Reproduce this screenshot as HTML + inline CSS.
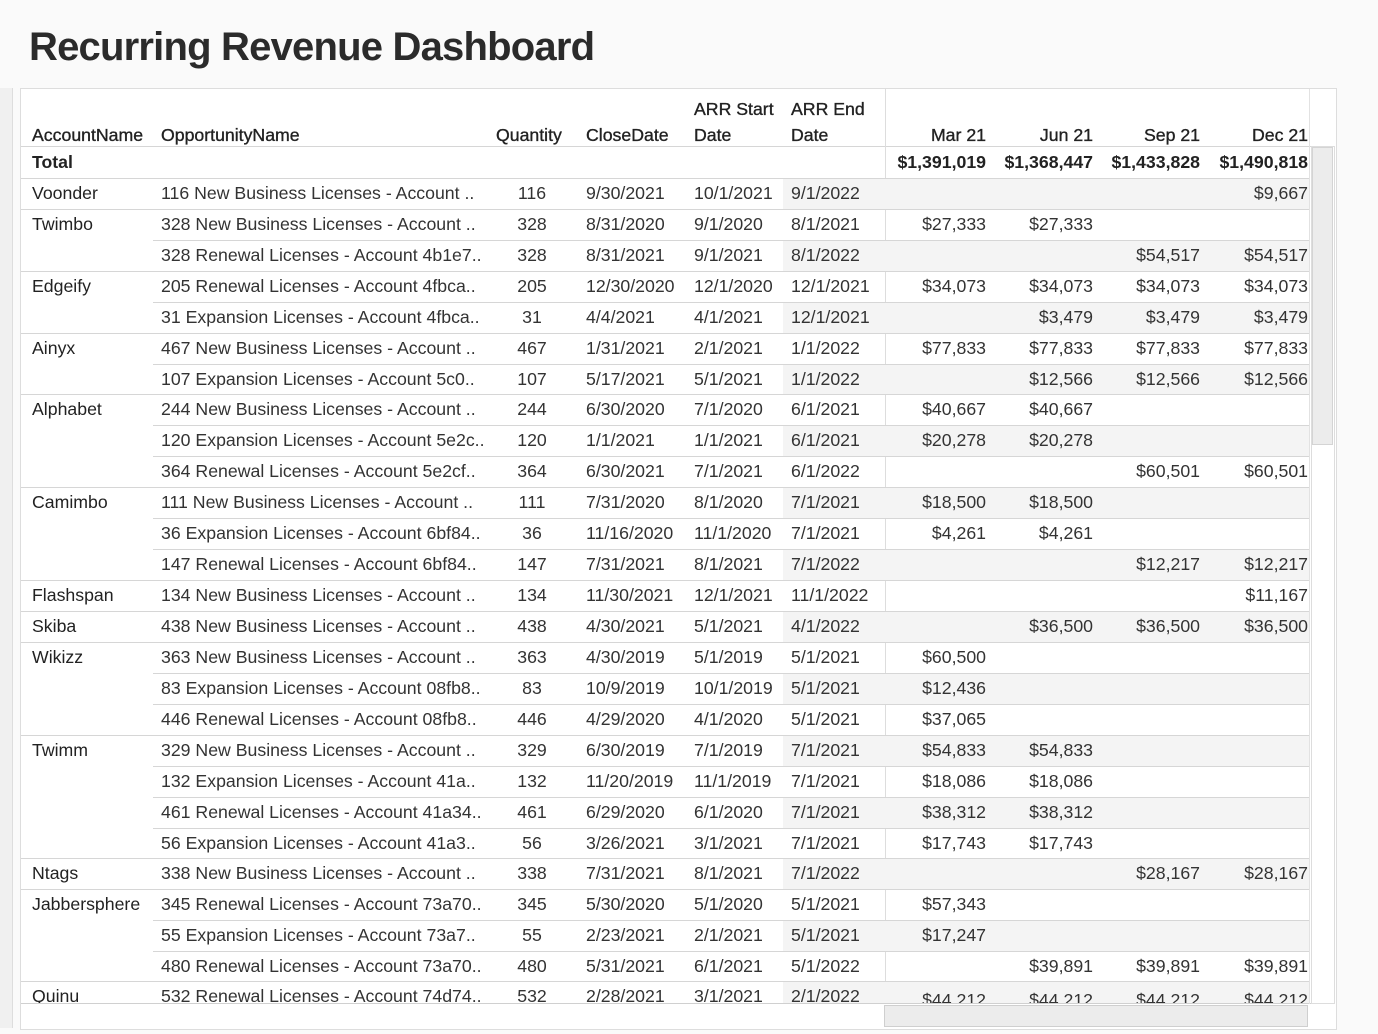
<!DOCTYPE html>
<html><head><meta charset="utf-8"><style>
body{margin:0;width:1378px;height:1034px;background:#fafafa;overflow:hidden;position:relative;font-family:"Liberation Sans",sans-serif;color:#333}
.t{position:absolute;left:29px;top:25px;font-size:40px;font-weight:bold;color:#2b2b2b;letter-spacing:-0.8px}
.lp{position:absolute;left:0;top:88px;width:12px;height:940px;background:#f0f0f0;border-right:1px solid #ddd}
.box{position:absolute;left:20px;top:88px;width:1315px;height:940px;background:#fff;border:1px solid #ddd;overflow:hidden}
.r{position:absolute;left:0;width:1290px;height:31px;font-size:17.7px;line-height:31px}
.r span{position:absolute;white-space:nowrap}
.sh{position:absolute;left:762px;width:526px;top:0;height:31px;background:#f4f4f4}
.ln{position:absolute;top:0;height:1px;background:#d6d6d6;right:2px}
.a{left:11px;color:#222}
.o{left:140px}
.q{left:480px;width:62px;text-align:center}
.c{left:565px}.s{left:673px}.e{left:770px}
.m1{right:325px}.m2{right:218px}.m3{right:111px}.m4{right:3px}
.h{position:absolute;font-size:17.7px;color:#222;-webkit-text-stroke:0.35px #222}
</style></head><body>
<div class="t">Recurring Revenue Dashboard</div>
<div class="lp"></div>
<div class="box">
<div class="h" style="left:11px;top:36px">AccountName</div>
<div class="h" style="left:140px;top:36px">OpportunityName</div>
<div class="h" style="left:475px;top:36px">Quantity</div>
<div class="h" style="left:565px;top:36px">CloseDate</div>
<div class="h" style="left:673px;top:7px;line-height:26px">ARR Start<br>Date</div>
<div class="h" style="left:770px;top:7px;line-height:26px">ARR End<br>Date</div>
<div class="h" style="right:350px;top:36px">Mar 21</div>
<div class="h" style="right:243px;top:36px">Jun 21</div>
<div class="h" style="right:136px;top:36px">Sep 21</div>
<div class="h" style="right:28px;top:36px">Dec 21</div>
<div style="position:absolute;left:0;top:57px;width:1290px;height:1px;background:#d6d6d6"></div>
<div class="r" style="top:58px;font-weight:bold;color:#222"><span class="a">Total</span><span class="m1">$1,391,019</span><span class="m2">$1,368,447</span><span class="m3">$1,433,828</span><span class="m4">$1,490,818</span></div>
<div style="position:absolute;left:864px;top:0;width:1px;height:915px;background:#ddd"></div>

<div class="r" style="top:89px"><div class="sh"></div><div class="ln" style="left:0"></div><span class="a">Voonder</span><span class="o">116 New Business Licenses - Account ..</span><span class="q">116</span><span class="c">9/30/2021</span><span class="s">10/1/2021</span><span class="e">9/1/2022</span><span class="m4">$9,667</span></div>
<div class="r" style="top:120px"><div class="ln" style="left:0"></div><span class="a">Twimbo</span><span class="o">328 New Business Licenses - Account ..</span><span class="q">328</span><span class="c">8/31/2020</span><span class="s">9/1/2020</span><span class="e">8/1/2021</span><span class="m1">$27,333</span><span class="m2">$27,333</span></div>
<div class="r" style="top:151px"><div class="sh"></div><div class="ln" style="left:132px"></div><span class="o">328 Renewal Licenses - Account 4b1e7..</span><span class="q">328</span><span class="c">8/31/2021</span><span class="s">9/1/2021</span><span class="e">8/1/2022</span><span class="m3">$54,517</span><span class="m4">$54,517</span></div>
<div class="r" style="top:182px"><div class="ln" style="left:0"></div><span class="a">Edgeify</span><span class="o">205 Renewal Licenses - Account 4fbca..</span><span class="q">205</span><span class="c">12/30/2020</span><span class="s">12/1/2020</span><span class="e">12/1/2021</span><span class="m1">$34,073</span><span class="m2">$34,073</span><span class="m3">$34,073</span><span class="m4">$34,073</span></div>
<div class="r" style="top:213px"><div class="sh"></div><div class="ln" style="left:132px"></div><span class="o">31 Expansion Licenses - Account 4fbca..</span><span class="q">31</span><span class="c">4/4/2021</span><span class="s">4/1/2021</span><span class="e">12/1/2021</span><span class="m2">$3,479</span><span class="m3">$3,479</span><span class="m4">$3,479</span></div>
<div class="r" style="top:244px"><div class="ln" style="left:0"></div><span class="a">Ainyx</span><span class="o">467 New Business Licenses - Account ..</span><span class="q">467</span><span class="c">1/31/2021</span><span class="s">2/1/2021</span><span class="e">1/1/2022</span><span class="m1">$77,833</span><span class="m2">$77,833</span><span class="m3">$77,833</span><span class="m4">$77,833</span></div>
<div class="r" style="top:275px"><div class="sh"></div><div class="ln" style="left:132px"></div><span class="o">107 Expansion Licenses - Account 5c0..</span><span class="q">107</span><span class="c">5/17/2021</span><span class="s">5/1/2021</span><span class="e">1/1/2022</span><span class="m2">$12,566</span><span class="m3">$12,566</span><span class="m4">$12,566</span></div>
<div class="r" style="top:305px"><div class="ln" style="left:0"></div><span class="a">Alphabet</span><span class="o">244 New Business Licenses - Account ..</span><span class="q">244</span><span class="c">6/30/2020</span><span class="s">7/1/2020</span><span class="e">6/1/2021</span><span class="m1">$40,667</span><span class="m2">$40,667</span></div>
<div class="r" style="top:336px"><div class="sh"></div><div class="ln" style="left:132px"></div><span class="o">120 Expansion Licenses - Account 5e2c..</span><span class="q">120</span><span class="c">1/1/2021</span><span class="s">1/1/2021</span><span class="e">6/1/2021</span><span class="m1">$20,278</span><span class="m2">$20,278</span></div>
<div class="r" style="top:367px"><div class="ln" style="left:132px"></div><span class="o">364 Renewal Licenses - Account 5e2cf..</span><span class="q">364</span><span class="c">6/30/2021</span><span class="s">7/1/2021</span><span class="e">6/1/2022</span><span class="m3">$60,501</span><span class="m4">$60,501</span></div>
<div class="r" style="top:398px"><div class="sh"></div><div class="ln" style="left:0"></div><span class="a">Camimbo</span><span class="o">111 New Business Licenses - Account ..</span><span class="q">111</span><span class="c">7/31/2020</span><span class="s">8/1/2020</span><span class="e">7/1/2021</span><span class="m1">$18,500</span><span class="m2">$18,500</span></div>
<div class="r" style="top:429px"><div class="ln" style="left:132px"></div><span class="o">36 Expansion Licenses - Account 6bf84..</span><span class="q">36</span><span class="c">11/16/2020</span><span class="s">11/1/2020</span><span class="e">7/1/2021</span><span class="m1">$4,261</span><span class="m2">$4,261</span></div>
<div class="r" style="top:460px"><div class="sh"></div><div class="ln" style="left:132px"></div><span class="o">147 Renewal Licenses - Account 6bf84..</span><span class="q">147</span><span class="c">7/31/2021</span><span class="s">8/1/2021</span><span class="e">7/1/2022</span><span class="m3">$12,217</span><span class="m4">$12,217</span></div>
<div class="r" style="top:491px"><div class="ln" style="left:0"></div><span class="a">Flashspan</span><span class="o">134 New Business Licenses - Account ..</span><span class="q">134</span><span class="c">11/30/2021</span><span class="s">12/1/2021</span><span class="e">11/1/2022</span><span class="m4">$11,167</span></div>
<div class="r" style="top:522px"><div class="sh"></div><div class="ln" style="left:0"></div><span class="a">Skiba</span><span class="o">438 New Business Licenses - Account ..</span><span class="q">438</span><span class="c">4/30/2021</span><span class="s">5/1/2021</span><span class="e">4/1/2022</span><span class="m2">$36,500</span><span class="m3">$36,500</span><span class="m4">$36,500</span></div>
<div class="r" style="top:553px"><div class="ln" style="left:0"></div><span class="a">Wikizz</span><span class="o">363 New Business Licenses - Account ..</span><span class="q">363</span><span class="c">4/30/2019</span><span class="s">5/1/2019</span><span class="e">5/1/2021</span><span class="m1">$60,500</span></div>
<div class="r" style="top:584px"><div class="sh"></div><div class="ln" style="left:132px"></div><span class="o">83 Expansion Licenses - Account 08fb8..</span><span class="q">83</span><span class="c">10/9/2019</span><span class="s">10/1/2019</span><span class="e">5/1/2021</span><span class="m1">$12,436</span></div>
<div class="r" style="top:615px"><div class="ln" style="left:132px"></div><span class="o">446 Renewal Licenses - Account 08fb8..</span><span class="q">446</span><span class="c">4/29/2020</span><span class="s">4/1/2020</span><span class="e">5/1/2021</span><span class="m1">$37,065</span></div>
<div class="r" style="top:646px"><div class="sh"></div><div class="ln" style="left:0"></div><span class="a">Twimm</span><span class="o">329 New Business Licenses - Account ..</span><span class="q">329</span><span class="c">6/30/2019</span><span class="s">7/1/2019</span><span class="e">7/1/2021</span><span class="m1">$54,833</span><span class="m2">$54,833</span></div>
<div class="r" style="top:677px"><div class="ln" style="left:132px"></div><span class="o">132 Expansion Licenses - Account 41a..</span><span class="q">132</span><span class="c">11/20/2019</span><span class="s">11/1/2019</span><span class="e">7/1/2021</span><span class="m1">$18,086</span><span class="m2">$18,086</span></div>
<div class="r" style="top:708px"><div class="sh"></div><div class="ln" style="left:132px"></div><span class="o">461 Renewal Licenses - Account 41a34..</span><span class="q">461</span><span class="c">6/29/2020</span><span class="s">6/1/2020</span><span class="e">7/1/2021</span><span class="m1">$38,312</span><span class="m2">$38,312</span></div>
<div class="r" style="top:739px"><div class="ln" style="left:132px"></div><span class="o">56 Expansion Licenses - Account 41a3..</span><span class="q">56</span><span class="c">3/26/2021</span><span class="s">3/1/2021</span><span class="e">7/1/2021</span><span class="m1">$17,743</span><span class="m2">$17,743</span></div>
<div class="r" style="top:769px"><div class="sh"></div><div class="ln" style="left:0"></div><span class="a">Ntags</span><span class="o">338 New Business Licenses - Account ..</span><span class="q">338</span><span class="c">7/31/2021</span><span class="s">8/1/2021</span><span class="e">7/1/2022</span><span class="m3">$28,167</span><span class="m4">$28,167</span></div>
<div class="r" style="top:800px"><div class="ln" style="left:0"></div><span class="a">Jabbersphere</span><span class="o">345 Renewal Licenses - Account 73a70..</span><span class="q">345</span><span class="c">5/30/2020</span><span class="s">5/1/2020</span><span class="e">5/1/2021</span><span class="m1">$57,343</span></div>
<div class="r" style="top:831px"><div class="sh"></div><div class="ln" style="left:132px"></div><span class="o">55 Expansion Licenses - Account 73a7..</span><span class="q">55</span><span class="c">2/23/2021</span><span class="s">2/1/2021</span><span class="e">5/1/2021</span><span class="m1">$17,247</span></div>
<div class="r" style="top:862px"><div class="ln" style="left:132px"></div><span class="o">480 Renewal Licenses - Account 73a70..</span><span class="q">480</span><span class="c">5/31/2021</span><span class="s">6/1/2021</span><span class="e">5/1/2022</span><span class="m2">$39,891</span><span class="m3">$39,891</span><span class="m4">$39,891</span></div>
<div class="r" style="top:892px;height:23px;overflow:hidden"><div class="sh"></div><div class="ln" style="left:0"></div><span class="a">Quinu</span><span class="o">532 Renewal Licenses - Account 74d74..</span><span class="q">532</span><span class="c">2/28/2021</span><span class="s">3/1/2021</span><span class="e">2/1/2022</span><span class="m1" style="top:4px">$44,212</span><span class="m2" style="top:4px">$44,212</span><span class="m3" style="top:4px">$44,212</span><span class="m4" style="top:4px">$44,212</span></div>
<div style="position:absolute;left:0;top:914px;width:1290px;height:1px;background:#d0d0d0"></div>
<div style="position:absolute;left:1288px;top:0;width:1px;height:915px;background:#e2e2e2"></div>
<div style="position:absolute;left:1290px;top:57px;width:22px;height:856px;background:#fff;border:1px solid #ddd"></div>
<div style="position:absolute;left:1291px;top:58px;width:21px;height:298px;background:#ececec;border:1px solid #d4d4d4;box-sizing:border-box"></div>
<div style="position:absolute;left:863px;top:916px;width:422px;height:20px;background:#ececec;border:1px solid #cfcfcf"></div>
</div>
</body></html>
